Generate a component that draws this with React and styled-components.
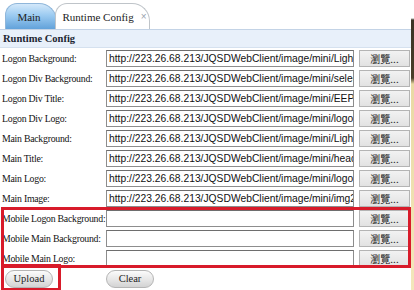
import React from "react";
import styled, { createGlobalStyle } from "styled-components";

const Global = createGlobalStyle`
  html, body { margin: 0; padding: 0; background: #fff; }
  body { width: 414px; height: 290px; overflow: hidden; font-family: "Liberation Serif", "Times New Roman", serif; }
`;

const Page = styled.div`
  position: relative;
  display: flex;
  width: 414px;
  height: 290px;
  overflow: hidden;
`;

const Main = styled.div`
  flex: 1;
  display: flex;
  flex-direction: column;
  min-width: 0;
`;

const Edge = styled.div`
  width: 3px;
  background: linear-gradient(to bottom, #fff 0px, #fff 18px, #3a3326 20px, #4a3f2a 78px, #e9d9a4 84px, #f3e7bb 100%);
`;

const TabBar = styled.div`
  height: 29px;
  display: flex;
  align-items: flex-end;
  padding-left: 5px;
  box-sizing: border-box;
`;

const Tab = styled.div`
  height: 26px;
  box-sizing: border-box;
  display: flex;
  align-items: center;
  justify-content: center;
  gap: 7px;
  font-size: 11px;
  color: #222;
  border-radius: 12px 18px 0 0;
  ${(p) =>
    p.$active
      ? `
    width: 95px;
    margin-left: -2px;
    background: #fff;
    border: 1px solid #bfc4c9;
    border-bottom: none;
    padding-left: 4px;
  `
      : `
    width: 52px;
    background: linear-gradient(to bottom, #d3e8fa 0%, #9ccbf1 45%, #62a2da 100%);
    border: 1px solid #8fb6da;
    border-bottom: none;
    padding-right: 4px;
  `}
`;

const Close = styled.span`
  color: #9aa3ad;
  font-family: "Liberation Sans", Arial, sans-serif;
  font-size: 10px;
`;

const Header = styled.div`
  height: 19px;
  box-sizing: border-box;
  background: #e8f0fa;
  border-top: 1px solid #c3d3e6;
  border-bottom: 1px solid #d5e1ef;
  display: flex;
  align-items: center;
  padding-left: 3px;
  font-weight: bold;
  font-size: 10.5px;
  color: #1c2530;
`;

const Form = styled.div`
  display: flex;
  flex-direction: column;
  gap: 3px;
  padding-top: 2px;
`;

const Row = styled.div`
  display: flex;
  align-items: center;
  height: 17px;
`;

const Label = styled.div`
  width: 104px;
  padding-left: 2px;
  font-size: 9.8px;
  letter-spacing: -0.25px;
  color: #111;
  white-space: nowrap;
`;

const Field = styled.div`
  width: 248px;
  height: 17px;
  box-sizing: border-box;
  border: 1px solid #8d8d8d;
  border-top-color: #6e6e6e;
  background: #fff;
  font-family: "Liberation Sans", Arial, sans-serif;
  font-size: 10.3px;
  line-height: 15px;
  padding-left: 2px;
  color: #111;
  white-space: nowrap;
  overflow: hidden;
`;

const Browse = styled.div`
  width: 51px;
  height: 17px;
  margin-left: 5px;
  box-sizing: border-box;
  border: 1px solid #b4b4b4;
  background: linear-gradient(to bottom, #f2f2f2, #e2e2e2);
  font-family: "Noto Sans CJK TC", "Liberation Sans", sans-serif;
  font-size: 10px;
  line-height: 15px;
  text-align: center;
  color: #222;
`;

const Actions = styled.div`
  display: flex;
  gap: 53px;
  padding: 3px 0 0 5px;
`;

const Pill = styled.div`
  width: 48px;
  height: 18px;
  box-sizing: border-box;
  border: 1px solid #b5b5b5;
  border-radius: 9px;
  background: linear-gradient(to bottom, #fbfbfb 0%, #e6e6e6 55%, #d3d3d3 100%);
  font-size: 10.5px;
  line-height: 16px;
  text-align: center;
  color: #222;
`;

const Mark = styled.div`
  position: absolute;
  box-sizing: border-box;
  border: 3px solid #d81b2a;
  pointer-events: none;
`;

const url = "http://223.26.68.213/JQSDWebClient/image/mini/";

const rows = [
  ["Logon Background:", url + "LightBlue.jpg"],
  ["Logon Div Background:", url + "selectBg.png"],
  ["Logon Div Title:", url + "EEP2013.png"],
  ["Logon Div Logo:", url + "logo2.png"],
  ["Main Background:", url + "LightBlue.jpg"],
  ["Main Title:", url + "header.png"],
  ["Main Logo:", url + "logo2.png"],
  ["Main Image:", url + "img2.png"],
  ["Mobile Logon Background:", ""],
  ["Mobile Main Background:", ""],
  ["Mobile Main Logo:", ""],
];

export default function App() {
  return (
    <>
      <Global />
      <Page>
        <Main>
          <TabBar>
            <Tab>Main</Tab>
            <Tab $active>
              Runtime Config <Close>×</Close>
            </Tab>
          </TabBar>
          <Header>Runtime Config</Header>
          <Form>
            {rows.map(([label, value]) => (
              <Row key={label}>
                <Label>{label}</Label>
                <Field>{value}</Field>
                <Browse>瀏覽...</Browse>
              </Row>
            ))}
          </Form>
          <Actions>
            <Pill>Upload</Pill>
            <Pill>Clear</Pill>
          </Actions>
        </Main>
        <Edge />
        <Mark style={{ left: 1, top: 207, width: 410, height: 61 }} />
        <Mark style={{ left: 1, top: 264, width: 60, height: 27 }} />
      </Page>
    </>
  );
}
